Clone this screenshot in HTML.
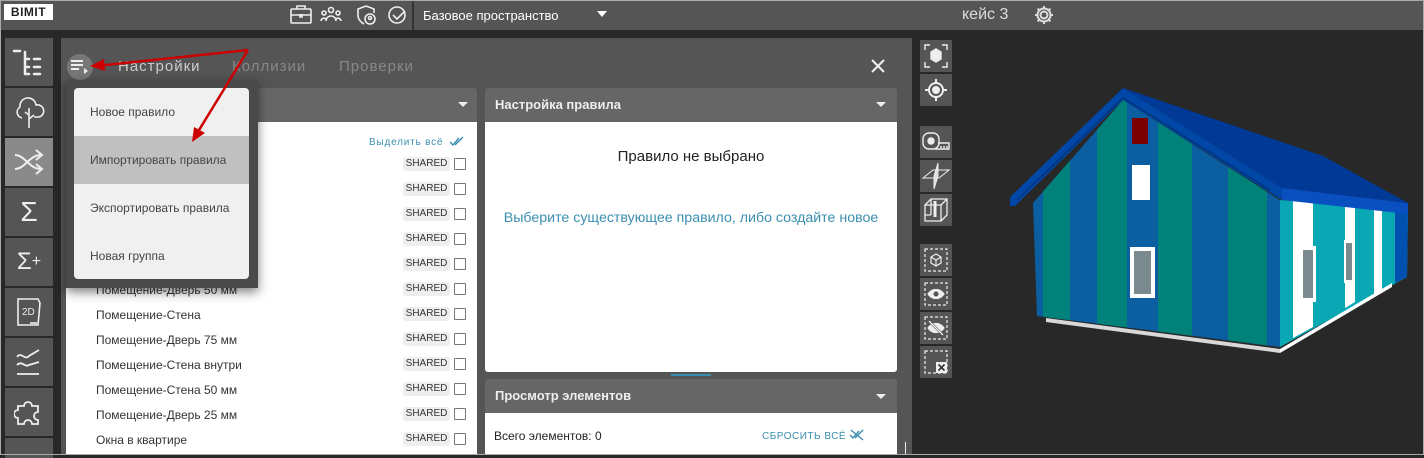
<!DOCTYPE html>
<html><head><meta charset="utf-8"><style>
*{box-sizing:border-box;margin:0;padding:0}
body{width:1424px;height:455px;overflow:hidden;background:#282828;font-family:"Liberation Sans","Noto Sans CJK SC",sans-serif;position:relative}
.a{position:absolute}
.top{left:0;top:0;width:1424px;height:30px;background:#555}
.sb{left:5px;width:48px;height:48px;background:#555;display:flex;align-items:center;justify-content:center}
.tb{left:920px;width:32px;height:32px;background:#555;display:flex;align-items:center;justify-content:center}
.row{left:96px;font-size:12px;color:#333}
.sh{left:403px;width:47px;height:14px;background:#eee;border-radius:3px;font-size:10px;color:#333;text-align:center;line-height:14px}
.cb{left:454px;width:12px;height:12px;border:1.5px solid #777;border-radius:1px}
.mi{left:74px;width:175px;height:48px;font-size:12px;color:#444;padding-left:16px;line-height:48px}
</style></head><body>
<div class="a top"></div>
<div class="a" style="left:4px;top:4px;width:49px;height:16px;background:#fff;font-size:12px;font-weight:bold;color:#222;line-height:16px;text-align:center;letter-spacing:0.5px">BIMIT</div>
<svg class="a" style="left:287px;top:3px" width="125" height="24" fill="none" stroke="#eee" stroke-width="1.6">
<rect x="4" y="6" width="20" height="14" rx="1"/><path d="M10 6V3h8v3M4 12h20M13 11v3h2v-3"/>
<circle cx="44" cy="7" r="2.5"/><circle cx="37" cy="10" r="2"/><circle cx="51" cy="10" r="2"/><path d="M39 18a5 5 0 0 1 10 0M34 18a3 3 0 0 1 5-2M49 16a3 3 0 0 1 5 2"/>
<path d="M79 3l-8 3v6c0 5 4 8 6 9M79 3l8 3v4"/><circle cx="83" cy="16" r="5"/><circle cx="83" cy="15" r="1.5"/>
<circle cx="110" cy="12" r="8"/><path d="M106 12l4 4 8-8"/></svg>
<div class="a" style="left:412px;top:0;width:2px;height:30px;background:#333"></div>
<div class="a" style="left:423px;top:8px;font-size:13px;color:#fff">Базовое пространство</div>
<div class="a" style="left:597px;top:11px;width:0;height:0;border-left:5px solid transparent;border-right:5px solid transparent;border-top:6px solid #fff"></div>
<div class="a" style="left:962px;top:6px;font-size:16px;color:#ddd">кейс 3</div>
<svg class="a" style="left:1033px;top:4px" width="22" height="22" fill="none" stroke="#ddd" stroke-width="2"><circle cx="11" cy="11" r="3.5"/><path d="M11 2v3M11 17v3M2 11h3M17 11h3M4.6 4.6l2.2 2.2M15.2 15.2l2.2 2.2M4.6 17.4l2.2-2.2M15.2 6.8l2.2-2.2"/><circle cx="11" cy="11" r="6.5"/></svg>

<div class="a sb" style="top:38px"><svg width="36" height="30" fill="none" stroke="#eee" stroke-width="2.5" stroke-linecap="round"><path d="M3 4h6M14 5v22M14 12h4M14 20h4M14 27h4M23 12h6M23 20h6M23 27h6"/></svg></div>
<div class="a sb" style="top:88px"><svg width="34" height="32" fill="none" stroke="#eee" stroke-width="1.6"><path d="M10 22a6 6 0 0 1-2-11 8 8 0 0 1 16-2 6 6 0 0 1 3 12h-5M17 32V12M17 19l-4-3M17 23l5-4"/></svg></div>
<div class="a sb" style="top:138px;background:#8a8a8a"><svg width="34" height="30" fill="none" stroke="#eee" stroke-width="2"><path d="M3 8c10 0 14 14 26 14M3 22c10 0 14-14 26-14M24 3l6 5-6 5M24 17l6 5-6 5"/></svg></div>
<div class="a sb" style="top:188px;color:#eee;font-size:28px">Σ</div>
<div class="a sb" style="top:238px;color:#eee;font-size:24px">Σ<span style="font-size:16px">+</span></div>
<div class="a sb" style="top:288px"><svg width="28" height="32" fill="none" stroke="#eee" stroke-width="1.6"><path d="M3 3h20l2 4-2 22H3z"/><text x="7" y="19" font-size="10" fill="#eee" stroke="none" font-family="Liberation Sans">2D</text><path d="M15 27h7"/></svg></div>
<div class="a sb" style="top:338px"><svg width="28" height="30" fill="none" stroke="#eee" stroke-width="1.8"><path d="M2 10c4-6 8 4 12-1l10-6M2 18c5-5 8 3 12 0l10-3M2 27h22"/></svg></div>
<div class="a sb" style="top:388px"><svg width="30" height="30" fill="none" stroke="#eee" stroke-width="1.8"><path d="M4 9h6a4 4 0 1 1 8 0h6v6a4 4 0 1 0 0 8v4h-6a4 4 0 1 0-8 0H4v-6a4 4 0 1 1 0-8z"/></svg></div>
<div class="a sb" style="top:438px;height:20px"></div>

<div class="a" style="left:61px;top:38px;width:850px;height:417px;background:#555"></div>
<div class="a" style="left:67px;top:54px;width:26px;height:26px;border-radius:50%;background:#777"></div>
<svg class="a" style="left:71px;top:60px" width="20" height="14" fill="#eee"><rect x="0" y="0" width="12" height="2"/><rect x="0" y="4" width="12" height="2"/><rect x="0" y="8" width="8" height="2"/><path d="M13 8l4 3-4 3z"/></svg>
<div class="a" style="left:118px;top:58px;font-size:15px;color:#ccc;letter-spacing:1px">Настройки</div>
<div class="a" style="left:232px;top:58px;font-size:15px;color:#888;letter-spacing:1px">Коллизии</div>
<div class="a" style="left:339px;top:58px;font-size:15px;color:#888;letter-spacing:1px">Проверки</div>
<svg class="a" style="left:870px;top:58px" width="16" height="16" stroke="#eee" stroke-width="2"><path d="M2 2l12 12M14 2L2 14"/></svg>

<div class="a" style="left:66px;top:88px;width:411px;height:34px;background:#666;border-radius:3px 3px 0 0"></div>
<div class="a" style="left:458px;top:102px;border-left:5px solid transparent;border-right:5px solid transparent;border-top:5px solid #eee"></div>
<div class="a" style="left:66px;top:122px;width:411px;height:333px;background:#fff"></div>
<div class="a" style="left:369px;top:137px;font-size:10px;color:#3a8fb0;letter-spacing:0.8px">Выделить всё</div>
<svg class="a" style="left:449px;top:136px" width="16" height="12" fill="none" stroke="#3a8fb0" stroke-width="1.4"><path d="M1 6l3 3 6-7M6 9l8-8"/></svg>
<div class="a sh" style="top:157px">SHARED</div><div class="a cb" style="top:158px"></div>
<div class="a sh" style="top:182px">SHARED</div><div class="a cb" style="top:183px"></div>
<div class="a sh" style="top:207px">SHARED</div><div class="a cb" style="top:208px"></div>
<div class="a sh" style="top:232px">SHARED</div><div class="a cb" style="top:233px"></div>
<div class="a sh" style="top:257px">SHARED</div><div class="a cb" style="top:258px"></div>
<div class="a sh" style="top:282px">SHARED</div><div class="a cb" style="top:283px"></div>
<div class="a sh" style="top:307px">SHARED</div><div class="a cb" style="top:308px"></div>
<div class="a sh" style="top:332px">SHARED</div><div class="a cb" style="top:333px"></div>
<div class="a sh" style="top:357px">SHARED</div><div class="a cb" style="top:358px"></div>
<div class="a sh" style="top:382px">SHARED</div><div class="a cb" style="top:383px"></div>
<div class="a sh" style="top:407px">SHARED</div><div class="a cb" style="top:408px"></div>
<div class="a sh" style="top:432px">SHARED</div><div class="a cb" style="top:433px"></div>
<div class="a row" style="top:283px">Помещение-Дверь 50 мм</div>
<div class="a row" style="top:308px">Помещение-Стена</div>
<div class="a row" style="top:333px">Помещение-Дверь 75 мм</div>
<div class="a row" style="top:358px">Помещение-Стена внутри</div>
<div class="a row" style="top:383px">Помещение-Стена 50 мм</div>
<div class="a row" style="top:408px">Помещение-Дверь 25 мм</div>
<div class="a row" style="top:433px">Окна в квартире</div>

<div class="a" style="left:485px;top:88px;width:412px;height:34px;background:#666;border-radius:3px 3px 0 0"></div>
<div class="a" style="left:495px;top:97px;font-size:13px;font-weight:bold;color:#eee">Настройка правила</div>
<div class="a" style="left:876px;top:102px;border-left:5px solid transparent;border-right:5px solid transparent;border-top:5px solid #eee"></div>
<div class="a" style="left:485px;top:122px;width:412px;height:250px;background:#fff;border-radius:0 0 3px 3px"></div>
<div class="a" style="left:485px;top:148px;width:412px;text-align:center;font-size:15px;color:#222">Правило не выбрано</div>
<div class="a" style="left:485px;top:210px;width:412px;text-align:center;font-size:14.2px;color:#3a8fb0">Выберите существующее правило, либо создайте новое</div>
<div class="a" style="left:671px;top:374px;width:40px;height:2px;background:#3a8fb0"></div>
<div class="a" style="left:485px;top:379px;width:412px;height:34px;background:#666;border-radius:3px 3px 0 0"></div>
<div class="a" style="left:495px;top:388px;font-size:13px;font-weight:bold;color:#eee">Просмотр элементов</div>
<div class="a" style="left:876px;top:394px;border-left:5px solid transparent;border-right:5px solid transparent;border-top:5px solid #eee"></div>
<div class="a" style="left:485px;top:413px;width:412px;height:42px;background:#fff"></div>
<div class="a" style="left:494px;top:429px;font-size:12px;color:#222">Всего элементов: 0</div>
<div class="a" style="left:762px;top:431px;font-size:10px;color:#3a8fb0;letter-spacing:0.5px">СБРОСИТЬ ВСЁ</div>
<svg class="a" style="left:849px;top:429px" width="16" height="12" fill="none" stroke="#3a8fb0" stroke-width="1.4"><path d="M1 6l3 3 6-7M6 9l8-8M2 1l12 10"/></svg>
<div class="a" style="left:905px;top:442px;width:1px;height:12px;background:#eee"></div>

<div class="a" style="left:66px;top:80px;width:192px;height:208px;background:#4a4a4a;box-shadow:0 4px 10px rgba(0,0,0,.5)"></div>
<div class="a" style="left:74px;top:88px;width:175px;height:191px;background:#f0f0f0;border-radius:4px;overflow:hidden"></div>
<div class="a mi" style="top:88px">Новое правило</div>
<div class="a mi" style="top:136px;background:#c0c0c0">Импортировать правила</div>
<div class="a mi" style="top:184px">Экспортировать правила</div>
<div class="a mi" style="top:232px">Новая группа</div>

<svg class="a" style="left:0;top:0" width="300" height="200" fill="#c00" stroke="#c00" stroke-width="2.5"><path d="M248 50L96 66" fill="none"/><path d="M90 66l14-7 1 12z" stroke="none"/><path d="M248 50L196 135" fill="none"/><path d="M192 142l2-15 11 6z" stroke="none"/></svg>

<div class="a" style="left:911px;top:38px;width:1px;height:417px;background:#555"></div>
<div class="a tb" style="top:40px"><svg width="28" height="28" fill="none" stroke="#eee" stroke-width="1.4"><path d="M3 8V3h5M20 3h5v5M25 20v5h-5M8 25H3v-5"/><path d="M14 7l5 3v7l-5 3-5-3v-7z" fill="#eee"/></svg></div>
<div class="a tb" style="top:74px"><svg width="24" height="24" fill="none" stroke="#eee" stroke-width="2"><circle cx="12" cy="12" r="7"/><circle cx="12" cy="12" r="3" fill="#eee"/><path d="M12 1v4M12 19v4M1 12h4M19 12h4"/></svg></div>
<div class="a tb" style="top:126px"><svg width="30" height="30" fill="none" stroke="#eee" stroke-width="1.4"><rect x="2" y="6" width="16" height="16" rx="6"/><circle cx="10" cy="14" r="3" fill="#eee"/><path d="M14 22h14v-6H17M20 19v2M23 19v2M26 19v2"/></svg></div>
<div class="a tb" style="top:160px"><svg width="30" height="30" fill="#ddd" stroke="#eee" stroke-width="1"><path d="M17 2v13L13 28V15z"/><path d="M2 17l10-8h16l-10 8z" fill="none"/></svg></div>
<div class="a tb" style="top:194px"><svg width="26" height="26" fill="none" stroke="#eee" stroke-width="1.3"><path d="M2 8h16v16H2zM2 8l6-6h16v16l-6 6M18 8l6-6M8 2v16M8 18H2"/><path d="M12 4v16" stroke-width="3"/></svg></div>
<div class="a tb" style="top:244px"><svg width="26" height="26" fill="none" stroke="#eee" stroke-width="1.2"><rect x="2" y="2" width="22" height="22" stroke-dasharray="3 2"/><path d="M13 7l5 3v6l-5 3-5-3v-6zM8 10l5 3 5-3M13 13v6"/></svg></div>
<div class="a tb" style="top:278px"><svg width="26" height="26" fill="none" stroke="#eee" stroke-width="1.2"><rect x="2" y="2" width="22" height="22" stroke-dasharray="3 2"/><path d="M5 13c4-6 12-6 16 0-4 6-12 6-16 0z" fill="#eee"/><circle cx="13" cy="13" r="2.5" fill="#555" stroke="none"/></svg></div>
<div class="a tb" style="top:312px"><svg width="26" height="26" fill="none" stroke="#eee" stroke-width="1.2"><rect x="2" y="2" width="22" height="22" stroke-dasharray="3 2"/><path d="M5 13c4-6 12-6 16 0-4 6-12 6-16 0z" fill="#eee"/><path d="M6 6l14 14" stroke="#555" stroke-width="2.5"/><path d="M6 6l14 14" stroke-width="1.3"/></svg></div>
<div class="a tb" style="top:346px"><svg width="28" height="28" fill="none" stroke="#eee" stroke-width="1.2"><rect x="3" y="3" width="22" height="22" stroke-dasharray="3 2"/><rect x="14" y="14" width="11" height="11" fill="#eee" stroke="none"/><path d="M16.5 16.5l6 6M22.5 16.5l-6 6" stroke="#333" stroke-width="1.6"/></svg></div>

<svg class="a" style="left:0;top:0" width="1424" height="455">
<defs><clipPath id="fw"><polygon points="1033,203 1123,100 1280,200 1280,347 1037,316"/></clipPath></defs>
<polygon points="1033,203 1123,100 1280,200 1280,347 1037,316" fill="#0b5fa0"/>
<g clip-path="url(#fw)" fill="#00817a">
<rect x="1043" y="90" width="27" height="270"/><rect x="1097" y="90" width="30" height="270"/>
<rect x="1158" y="90" width="34" height="270"/><rect x="1228" y="90" width="39" height="270"/></g>
<polygon points="1280,200 1408,210 1407,277 1280,347" fill="#0aa8b5"/>
<polygon points="1293,201 1313,203 1313,327 1293,338" fill="#fff"/>
<polygon points="1345,205 1355,206 1355,302 1345,308" fill="#fff"/>
<polygon points="1374,207 1382,208 1382,290 1374,294" fill="#fff"/>
<polygon points="1395,209 1408,210 1407,277 1395,283" fill="#0050b0"/>
<polygon points="1046,318 1280,349 1280,353 1046,322" fill="#d8d8d8"/>
<polygon points="1280,349 1392,283 1392,287 1280,353" fill="#fff"/>
<polygon points="1123,88 1323,156 1408,203 1282,188" fill="#003a96"/>
<polygon points="1282,188 1408,203 1408,214 1282,200" fill="#0a4fc0"/>
<polygon points="1010,197 1123,88 1282,188 1282,200 1123,100 1015,206 1010,206" fill="#0047a8"/>
<polyline points="1017,200 1123,98 1270,190" fill="none" stroke="#00357a" stroke-width="1.5"/>
<rect x="1132" y="118" width="16" height="26" fill="#7a0000"/>
<rect x="1132" y="165" width="18" height="35" fill="#fff"/>
<rect x="1130" y="247" width="25" height="51" fill="#fff"/><rect x="1134" y="251" width="17" height="43" fill="#7a8a8e"/>
<rect x="1300" y="246" width="16" height="56" fill="#fff"/><rect x="1303" y="250" width="10" height="48" fill="#7a8a8e"/>
<rect x="1344" y="240" width="10" height="43" fill="#fff"/><rect x="1346" y="243" width="6" height="37" fill="#7a8a8e"/>
</svg>
<div class="a" style="left:0;top:0;width:1424px;height:455px;border:1px solid #aaa;pointer-events:none"></div>
</body></html>
